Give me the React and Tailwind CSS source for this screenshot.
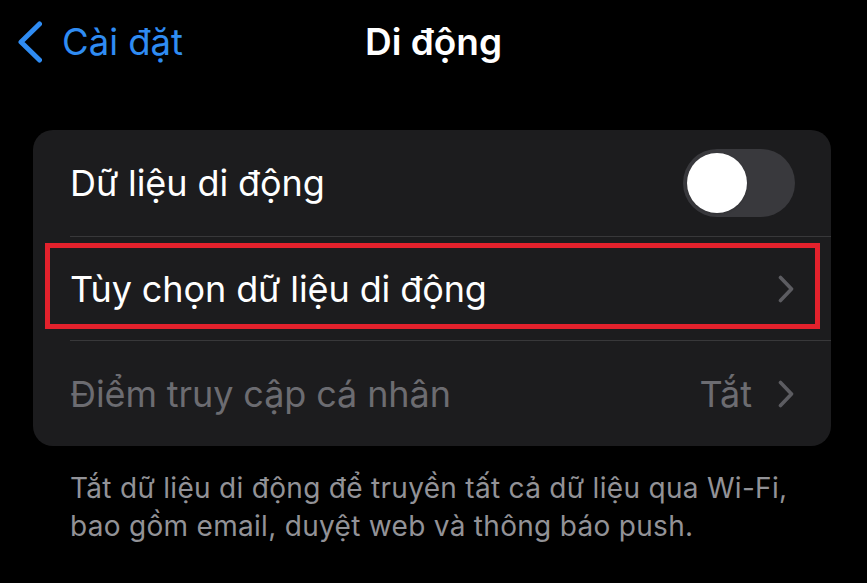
import { useState } from "react";

function Chevron({ className }) {
  return (
    <svg viewBox="0 0 16 28" className={className} fill="none">
      <path
        d="M2.5 2.5 L13.5 14 L2.5 25.5"
        stroke="currentColor"
        strokeWidth="3.6"
        strokeLinecap="round"
        strokeLinejoin="round"
      />
    </svg>
  );
}

function App() {
  const [cellular, setCellular] = useState(false);

  return (
    <div
      className="w-[867px] h-[583px] bg-black text-white overflow-hidden"
      style={{ fontFamily: "Inter, 'Noto Sans', sans-serif" }}
    >
      {/* Header */}
      <div className="h-[84px] grid grid-cols-[1fr_auto_1fr] items-center">
        <div className="flex items-center pl-[18px] text-[#2f8cf3]">
          <svg viewBox="0 0 24 42" className="w-[24px] h-[42px]" fill="none">
            <path
              d="M21.5 3 L3 21 L21.5 39"
              stroke="currentColor"
              strokeWidth="5"
              strokeLinecap="round"
              strokeLinejoin="round"
            />
          </svg>
          <span className="ml-[20px] text-[36.5px]">Cài đặt</span>
        </div>
        <h1 className="text-[37px] font-semibold">Di động</h1>
        <div />
      </div>

      {/* Card */}
      <div className="ml-[33px] mt-[46px] w-[798px] rounded-[20px] bg-[#1c1c1e]">
        {/* Cellular data */}
        <div className="h-[106px] flex items-center pl-[37px] pr-[36px]">
          <div className="flex-1 text-[36px] tracking-[-0.1px]">Dữ liệu di động</div>
          <button
            type="button"
            onClick={() => setCellular(!cellular)}
            className={`w-[112px] h-[68px] rounded-full p-[4px] flex ${
              cellular ? "bg-[#30d158] justify-end" : "bg-[#39393d] justify-start"
            }`}
          >
            <span className="w-[60px] h-[60px] rounded-full bg-white shadow" />
          </button>
        </div>

        {/* Options */}
        <div className="relative h-[104px] flex items-center pl-[37px] border-t border-[#38383a]">
          <div className="absolute left-0 top-[-1px] h-[1px] bg-[#1c1c1e] w-[37px]" />
          <span className="flex-1 text-[36px] tracking-[-0.1px]">Tùy chọn dữ liệu di động</span>
          <Chevron className="w-[16px] h-[28px] mr-[37px] text-[#5c5c61]" />
          <div className="absolute left-[12px] right-[11px] top-[6px] bottom-[11px] border-[5px] border-[#e3212c]" />
        </div>

        {/* Hotspot */}
        <div className="relative h-[106px] flex items-center pl-[37px] border-t border-[#38383a]">
          <div className="absolute left-0 top-[-1px] h-[1px] bg-[#1c1c1e] w-[37px]" />
          <span className="flex-1 text-[36px] tracking-[-0.1px] text-[#6c6c71]">
            Điểm truy cập cá nhân
          </span>
          <span className="text-[36px] text-[#6c6c71] mr-[26px]">Tắt</span>
          <Chevron className="w-[16px] h-[28px] mr-[37px] text-[#5c5c61]" />
        </div>
      </div>

      {/* Footer */}
      <p className="ml-[70px] mt-[23px] text-[28px] leading-[38px] text-[#929297] tracking-[0.3px] whitespace-nowrap">
        Tắt dữ liệu di động để truyền tất cả dữ liệu qua Wi-Fi,
        <br />
        bao gồm email, duyệt web và thông báo push.
      </p>
    </div>
  );
}

export default App;
